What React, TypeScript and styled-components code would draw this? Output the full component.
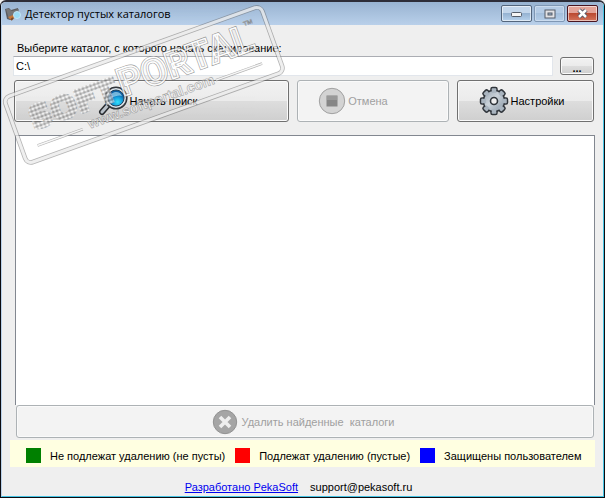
import React from 'react';
import styled, { createGlobalStyle, css } from 'styled-components';

const GlobalStyle = createGlobalStyle`
  * { box-sizing: border-box; }
  body {
    margin: 0;
    background: #efefef;
    color: #000;
    font: 11px/14px "Liberation Sans", Arial, sans-serif;
  }
  button, input { font: inherit; color: inherit; }
`;

const Window = styled.div`
  position: relative;
  display: flex;
  flex-direction: column;
  min-height: 100vh;
  border: 1px solid #0b0b10;
  border-top: 2px solid #2d2d38;
  border-radius: 6px 6px 0 0;
  background: #efefef;
  overflow: hidden;
`;

const Frame = styled.div`
  flex: 1;
  display: flex;
  flex-direction: column;
  border: 1px solid #46c4e4;
  border-width: 0 1px 1px;
  border-left-color: #b9d1ea;
`;

const TitleBar = styled.header`
  display: flex;
  align-items: center;
  height: 23px;
  padding: 0 5px 0 3px;
  background: linear-gradient(#98b3d1, #b9d0ea);
`;

const Title = styled.h1`
  flex: 1;
  margin: 0 0 0 3px;
  font: 11px/18px "Open Sans", "Noto Sans", sans-serif;
`;

const Caption = styled.button<{ $kind?: 'close' | 'disabled' }>`
  display: grid;
  place-items: center;
  width: 31px;
  height: 17px;
  margin-left: 2px;
  padding: 0;
  border: 1px solid #53657c;
  border-radius: 2px;
  background: linear-gradient(#c3d6eb 48%, #96b3d2 50%, #b8d2ec);
  box-shadow: inset 0 0 0 1px #ffffff90;
  ${p => p.$kind === 'disabled' && css`
    border-color: #7f97b4;
    background: linear-gradient(#b4cbe5 48%, #a4bfdc 50%, #b5cee9);
    box-shadow: inset 0 0 0 1px #ffffff50;
  `}
  ${p => p.$kind === 'close' && css`
    border-color: #4a1520;
    background: linear-gradient(#e3a398 45%, #bb4a31 50%, #d4745c);
  `}
`;

const Client = styled.main`
  flex: 1;
  display: flex;
  flex-direction: column;
  padding: 16px 8px 2px;
`;

const PathLabel = styled.label`
  padding-left: 7px;
  line-height: 15px;
`;

const PathRow = styled.div`
  display: flex;
  gap: 7px;
  padding: 0 1px 0 3px;
`;

const PathInput = styled.input`
  flex: 1;
  min-width: 0;
  height: 20px;
  padding: 0 2px;
  border: 1px solid #e2e6ec;
  border-top-color: #abadb3;
  background: #fff;
`;

const Button = styled.button<{ $inset?: number }>`
  display: flex;
  align-items: center;
  justify-content: center;
  gap: 2px;
  padding: 0 ${p => p.$inset ?? 0}px 0 0;
  border: 1px solid #707070;
  border-radius: 3px;
  background: linear-gradient(#f2f2f2, #ebebeb 49%, #dddddd 51%, #cfcfcf);
  box-shadow: inset 0 0 0 1px #fafafa;
  white-space: pre;
  &:disabled {
    border-color: #adb2b5;
    background: #f3f3f3;
    color: #a0a0a0;
  }
`;

const Browse = styled(Button)`
  width: 34px;
  height: 18px;
  margin-top: 1px;
  padding-top: 3px;
  font-weight: bold;
`;

const Actions = styled.div`
  display: grid;
  grid-template-columns: 275fr 152fr 137fr;
  gap: 8px;
  height: 42px;
  margin: 4px 1px 13px 4px;
`;

const Results = styled.section`
  flex: 1;
  min-height: 80px;
  margin-left: 5px;
  border: 1px solid #828790;
  border-bottom: 0;
  background: #fff;
`;

const DeleteButton = styled(Button)`
  height: 33px;
  margin: 0 1px 2px 6px;
  gap: 4px;
`;

const Legend = styled.ul`
  display: flex;
  align-items: center;
  height: 27px;
  gap: 10px;
  margin: 0;
  padding: 4px 0 0 16px;
  list-style: none;
  background: #ffffe1;
`;

const LegendItem = styled.li<{ $color: string }>`
  display: flex;
  align-items: center;
  gap: 9px;
  white-space: nowrap;
  &::before {
    content: '';
    width: 15px;
    height: 15px;
    background: ${p => p.$color};
  }
`;

const Footer = styled.footer`
  display: flex;
  justify-content: center;
  gap: 12px;
  padding: 13px 8px 0 0;
  a { color: #0000f0; }
`;

const Watermark = styled.svg`
  position: absolute;
  top: -2px;
  left: -1px;
  opacity: 0.8;
  pointer-events: none;
`;

const FolderIcon = () => (
  <svg width="17" height="16" viewBox="0 0 17 16" aria-hidden="true">
    <path d="M0 3l4-1 2 2 7-2 1 8-9 4-3-1z" fill="#5c5c5f" />
    <path d="M1 3l3 10 8-4 2-6-7 2-3-2z" fill="#777779" />
    <path d="M3 11l5-2 2 2-4 3z" fill="#c8793a" />
    <circle cx="12" cy="9" r="3.5" fill="#9cdbf3" stroke="#c5e5f4" />
    <path d="M8 12l-2 2" stroke="#7b4a28" strokeWidth="2" />
  </svg>
);

const SearchIcon = () => (
  <svg width="30" height="30" viewBox="0 0 30 30" aria-hidden="true">
    <defs>
      <radialGradient id="lens" cx=".6" cy=".75">
        <stop offset="0" stopColor="#35e3ff" />
        <stop offset=".6" stopColor="#149edb" />
        <stop offset="1" stopColor="#0c62a5" />
      </radialGradient>
    </defs>
    <path d="M11 18l-7 8" stroke="#292c30" strokeWidth="6" strokeLinecap="round" />
    <path d="M11 18l-7 8" stroke="#b8c0c8" strokeWidth="3" strokeLinecap="round" />
    <circle cx="18" cy="12" r="10.8" fill="#dce4ea" stroke="#34383d" strokeWidth="1.6" />
    <circle cx="18" cy="12" r="8" fill="url(#lens)" stroke="#26445b" />
    <path d="M12 11c1-6 10-7 12-1-4-2-8 2-12 1z" fill="#bdefff" opacity=".6" />
  </svg>
);

const StopIcon = () => (
  <svg width="28" height="28" viewBox="0 0 28 28" aria-hidden="true">
    <circle cx="14" cy="14" r="12.7" fill="#d3d3d3" stroke="#a0a0a0" />
    <path d="M8.5 8.5h11v11h-11z" fill="#858585" />
    <path d="M9 9h10v4H9z" fill="#999" />
  </svg>
);

const teeth = [0, 45, 90, 135, 180, 225, 270, 315];

const GearIcon = () => (
  <svg width="30" height="30" viewBox="0 0 30 30" aria-hidden="true">
    <defs>
      <linearGradient id="metal" x2="1" y2="1">
        <stop stopColor="#98a4b0" />
        <stop offset=".45" stopColor="#cbd3da" />
        <stop offset="1" stopColor="#8694a2" />
      </linearGradient>
    </defs>
    {teeth.map(angle => (
      <rect key={angle} x="12" y="1.5" width="6" height="8" rx="1.5" transform={`rotate(${angle} 15 15)`} fill="#a9b4bf" stroke="#30353b" strokeWidth="1.5" />
    ))}
    <circle cx="15" cy="15" r="10.7" stroke="#30353b" strokeWidth="1.5" fill="url(#metal)" />
    {teeth.map(angle => (
      <rect key={angle} x="12.8" y="2.8" width="4.4" height="4" transform={`rotate(${angle} 15 15)`} fill="#a9b4bf" />
    ))}
    <circle cx="15" cy="15" r="3.5" fill="#eee" stroke="#30353b" strokeWidth="1.6" />
  </svg>
);

const CancelIcon = () => (
  <svg width="26" height="26" viewBox="0 0 26 26" aria-hidden="true">
    <circle cx="13" cy="13" r="11.7" fill="#a5a5a5" stroke="#929292" />
    <path d="M8 8l10 10M18 8L8 18" stroke="#eee" strokeWidth="3.6" />
  </svg>
);

const Stamp = () => (
  <Watermark width="300" height="175" viewBox="0 0 300 175" aria-hidden="true">
    <defs>
      <pattern id="bricks" width="4" height="4" patternUnits="userSpaceOnUse">
        <rect width="4" height="4" fill="#777" />
        <rect x=".4" y=".4" width="3.2" height="3.2" rx=".8" fill="#fafafa" />
      </pattern>
    </defs>
    <g transform="translate(1 97) rotate(-19.8)" fill="none">
      <rect x="2" y="2" width="273" height="70" rx="6" stroke="#666" strokeWidth="4.6" opacity=".6" />
      <rect x="2" y="2" width="273" height="70" rx="6" stroke="#f4f4f4" strokeWidth="3" opacity=".9" />
      <text x="20" y="42" fontSize="31" fontFamily="'DejaVu Sans', sans-serif" fontWeight="bold" fill="url(#bricks)" stroke="url(#bricks)" strokeWidth="3" opacity=".85">SOFT</text>
      <g fontFamily="Roboto, sans-serif" fontSize="38" fontWeight="bold">
        <text x="115" y="41" stroke="#555" strokeWidth="2.8" opacity=".7">PORTAL</text>
        <text x="115" y="41" fill="#eee" fillOpacity=".3" stroke="#fff" strokeWidth="1.5">PORTAL</text>
      </g>
      <text x="252" y="19" fontSize="11" fontFamily="'Liberation Sans', sans-serif" fill="#f4f4f4" stroke="#777" strokeWidth=".5">™</text>
      <text x="73" y="60" fontSize="14" fontFamily="'Liberation Sans', sans-serif" fontWeight="bold" fill="#f8f8f8" stroke="#888" strokeWidth=".6" opacity=".9">www.softportal.com</text>
      <path d="M18 58h48M208 57h49" stroke="#888" strokeWidth="2.6" opacity=".8" />
      <path d="M18 58h48M208 57h49" stroke="#f6f6f6" strokeWidth="1.4" />
    </g>
  </Watermark>
);

export default function App() {
  return (
    <Window>
      <GlobalStyle />
      <Frame>
        <TitleBar>
          <FolderIcon />
          <Title>Детектор пустых каталогов</Title>
          <Caption aria-label="Свернуть">
            <svg width="13" height="7"><rect x="1.5" y="2.5" width="10" height="4" rx="1" fill="#f5f5f5" stroke="#555d69" /></svg>
          </Caption>
          <Caption $kind="disabled" aria-label="Развернуть" disabled>
            <svg width="12" height="10"><rect x="1" y="1" width="10" height="8" fill="#e2e2e5" stroke="#555d69" /><rect x="4" y="4" width="4" height="2" fill="#9bb3ce" stroke="#555d69" /></svg>
          </Caption>
          <Caption $kind="close" aria-label="Закрыть">
            <svg width="13" height="11"><path d="M3 2l7 7M10 2L3 9" stroke="#535666" strokeWidth="4.5" /><path d="M3 2l7 7M10 2L3 9" stroke="#fff" strokeWidth="2.5" /></svg>
          </Caption>
        </TitleBar>
        <Client>
          <PathLabel htmlFor="path">Выберите каталог, с которого начать сканирование:</PathLabel>
          <PathRow>
            <PathInput id="path" defaultValue="C:\" />
            <Browse>...</Browse>
          </PathRow>
          <Actions>
            <Button $inset={8}><SearchIcon />Начать поиск</Button>
            <Button $inset={40} disabled><StopIcon />Отмена</Button>
            <Button $inset={8}><GearIcon />Настройки</Button>
          </Actions>
          <Results />
          <DeleteButton $inset={4} disabled><CancelIcon />{'Удалить найденные  каталоги'}</DeleteButton>
          <Legend>
            <LegendItem $color="#008000">Не подлежат удалению (не пусты)</LegendItem>
            <LegendItem $color="#ff0000">Подлежат удалению (пустые)</LegendItem>
            <LegendItem $color="#0000ff">Защищены пользователем</LegendItem>
          </Legend>
          <Footer>
            <a href="#pekasoft">Разработано PekaSoft</a>
            <span>support@pekasoft.ru</span>
          </Footer>
        </Client>
      </Frame>
      <Stamp />
    </Window>
  );
}
